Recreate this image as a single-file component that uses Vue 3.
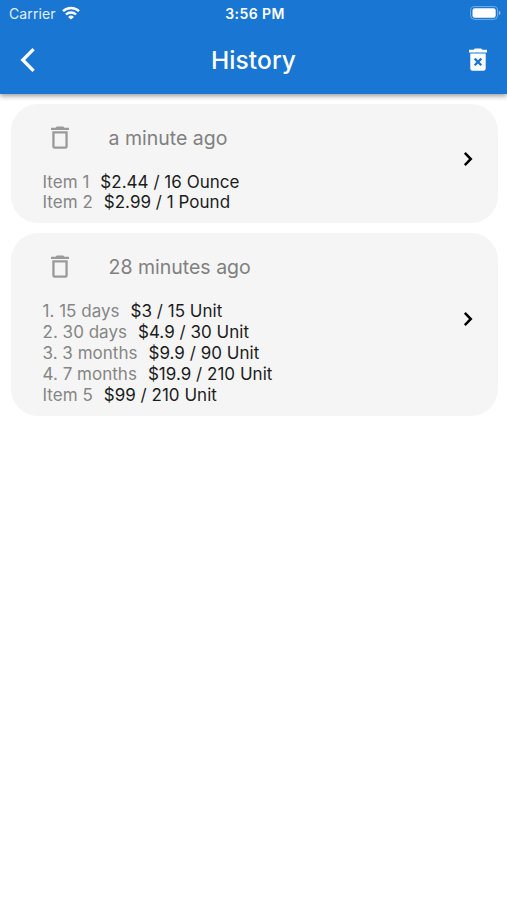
<script setup>
const cards = [
  {
    when: 'a minute ago',
    items: [
      { name: 'Item 1', price: '$2.44 / 16 Ounce' },
      { name: 'Item 2', price: '$2.99 / 1 Pound' },
    ],
  },
  {
    when: '28 minutes ago',
    items: [
      { name: '1. 15 days', price: '$3 / 15 Unit' },
      { name: '2. 30 days', price: '$4.9 / 30 Unit' },
      { name: '3. 3 months', price: '$9.9 / 90 Unit' },
      { name: '4. 7 months', price: '$19.9 / 210 Unit' },
      { name: 'Item 5', price: '$99 / 210 Unit' },
    ],
  },
]
</script>

<template>
  <div class="screen">
    <header class="top">
      <div class="status">
        <div class="carrier">
          <span>Carrier</span>
          <svg class="wifi" viewBox="0 0 18 14" width="18" height="14">
            <path d="M1 5.2a11.5 11.5 0 0 1 16 0" />
            <path d="M3.9 8.5a7.4 7.4 0 0 1 10.2 0" />
            <path class="dot" d="M9 13.6 6.1 10.9a4.1 4.1 0 0 1 5.8 0z" />
          </svg>
        </div>
        <span class="time">3:56 PM</span>
        <div class="power">
          <svg viewBox="0 0 31 14" width="31" height="14">
            <rect x=".6" y=".6" width="27" height="12.8" rx="4" fill="none" stroke="#fff" stroke-opacity=".4" />
            <rect x="2.5" y="2.2" width="23.2" height="9.6" rx="2.2" fill="#fff" />
            <path d="M28.8 4.8c2.2.6 2.2 3.8 0 4.4z" fill="#fff" fill-opacity=".5" />
          </svg>
        </div>
      </div>
      <div class="bar">
        <svg class="back" viewBox="0 0 16 26" width="16" height="26">
          <path d="M13.6 2.2 2.8 13l10.8 10.8" />
        </svg>
        <h1>History</h1>
        <svg class="clear" viewBox="0 0 18 24" width="18" height="24">
          <path fill="#fff" fill-rule="evenodd" d="M0 1.7h4.6L5.8.5h6.4l1.2 1.2H18v2.7H0zM1.3 5.6h15.4v14.8a2.3 2.3 0 0 1-2.3 2.3H3.6a2.3 2.3 0 0 1-2.3-2.3z" />
          <path d="m5.7 10.6 6.6 6.6m0-6.6-6.6 6.6" stroke="#1976d2" stroke-width="2.3" />
        </svg>
      </div>
    </header>
    <main class="list">
      <article v-for="card in cards" :key="card.when" class="card">
        <div class="body">
          <div class="heading">
            <svg class="trash" viewBox="0 0 18 24" width="18" height="24">
              <path fill="#9a9a9a" fill-rule="evenodd" d="M0 1.8h4.5L5.8.6h6.4l1.3 1.2H18V4H0zM1.3 5.3h15.4v15a2.5 2.5 0 0 1-2.5 2.5H3.8a2.5 2.5 0 0 1-2.5-2.5zm2.3 2.2v13h10.8v-13z" />
            </svg>
            <span class="when">{{ card.when }}</span>
          </div>
          <div v-for="item in card.items" :key="item.name" class="item">
            <span class="name">{{ item.name }}</span>
            <span class="price">{{ item.price }}</span>
          </div>
        </div>
        <svg class="next" viewBox="0 0 10 16" width="10" height="16">
          <path d="m1.8 1.9 6 6.1-6 6.1" />
        </svg>
      </article>
    </main>
  </div>
</template>

<style>
body {
  background: #fff;
}
</style>

<style scoped>
.screen {
  min-height: 900px;
  font-family: Inter, "Liberation Sans", sans-serif;
  background: #fff;
}
.top {
  height: 93.5px;
  color: #fff;
  background: #1976d2;
  box-shadow: 0 2px 5px rgba(0, 0, 0, .4);
}
.status {
  display: grid;
  grid-template-columns: 1fr auto 1fr;
  align-items: center;
  height: 26px;
  padding: 0 6px 0 9px;
}
.carrier {
  display: flex;
  align-items: center;
  gap: 6.5px;
  font-size: 14px;
  letter-spacing: .12px;
  color: #e3effa;
}
.wifi {
  fill: none;
  stroke: #fff;
  stroke-width: 2.4;
}
.wifi .dot {
  fill: #fff;
  stroke: none;
}
.time {
  padding-top: 1px;
  font-size: 14px;
  font-weight: 600;
  letter-spacing: .4px;
}
.power {
  display: flex;
  justify-content: flex-end;
}
.bar {
  display: grid;
  grid-template-columns: 1fr auto 1fr;
  align-items: center;
  height: 67px;
  padding: 0 20px;
}
.back {
  fill: none;
  stroke: #fff;
  stroke-width: 3.3;
}
h1 {
  margin: 0;
  font-size: 24.5px;
  font-weight: 500;
  line-height: 30px;
  letter-spacing: .1px;
}
.clear {
  justify-self: end;
}
.list {
  display: flex;
  flex-direction: column;
  gap: 10px;
  padding: 10.3px 9.5px 0 10.5px;
}
.card {
  display: flex;
  align-items: center;
  justify-content: space-between;
  padding: 0 24.5px 10.2px 32px;
  border-radius: 27px;
  background: #f5f5f5;
}
.heading {
  display: flex;
  align-items: center;
  gap: 40px;
  height: 67.9px;
  padding-left: 8px;
}
.when {
  font-size: 19.5px;
  color: #808080;
}
.item {
  display: flex;
  gap: 11px;
  font-size: 17px;
  line-height: 20.8px;
  letter-spacing: .02px;
  white-space: nowrap;
}
.name {
  color: #858585;
}
.price {
  color: #1c1c1c;
}
.next {
  fill: none;
  stroke: #000;
  stroke-width: 2.5;
}
</style>
